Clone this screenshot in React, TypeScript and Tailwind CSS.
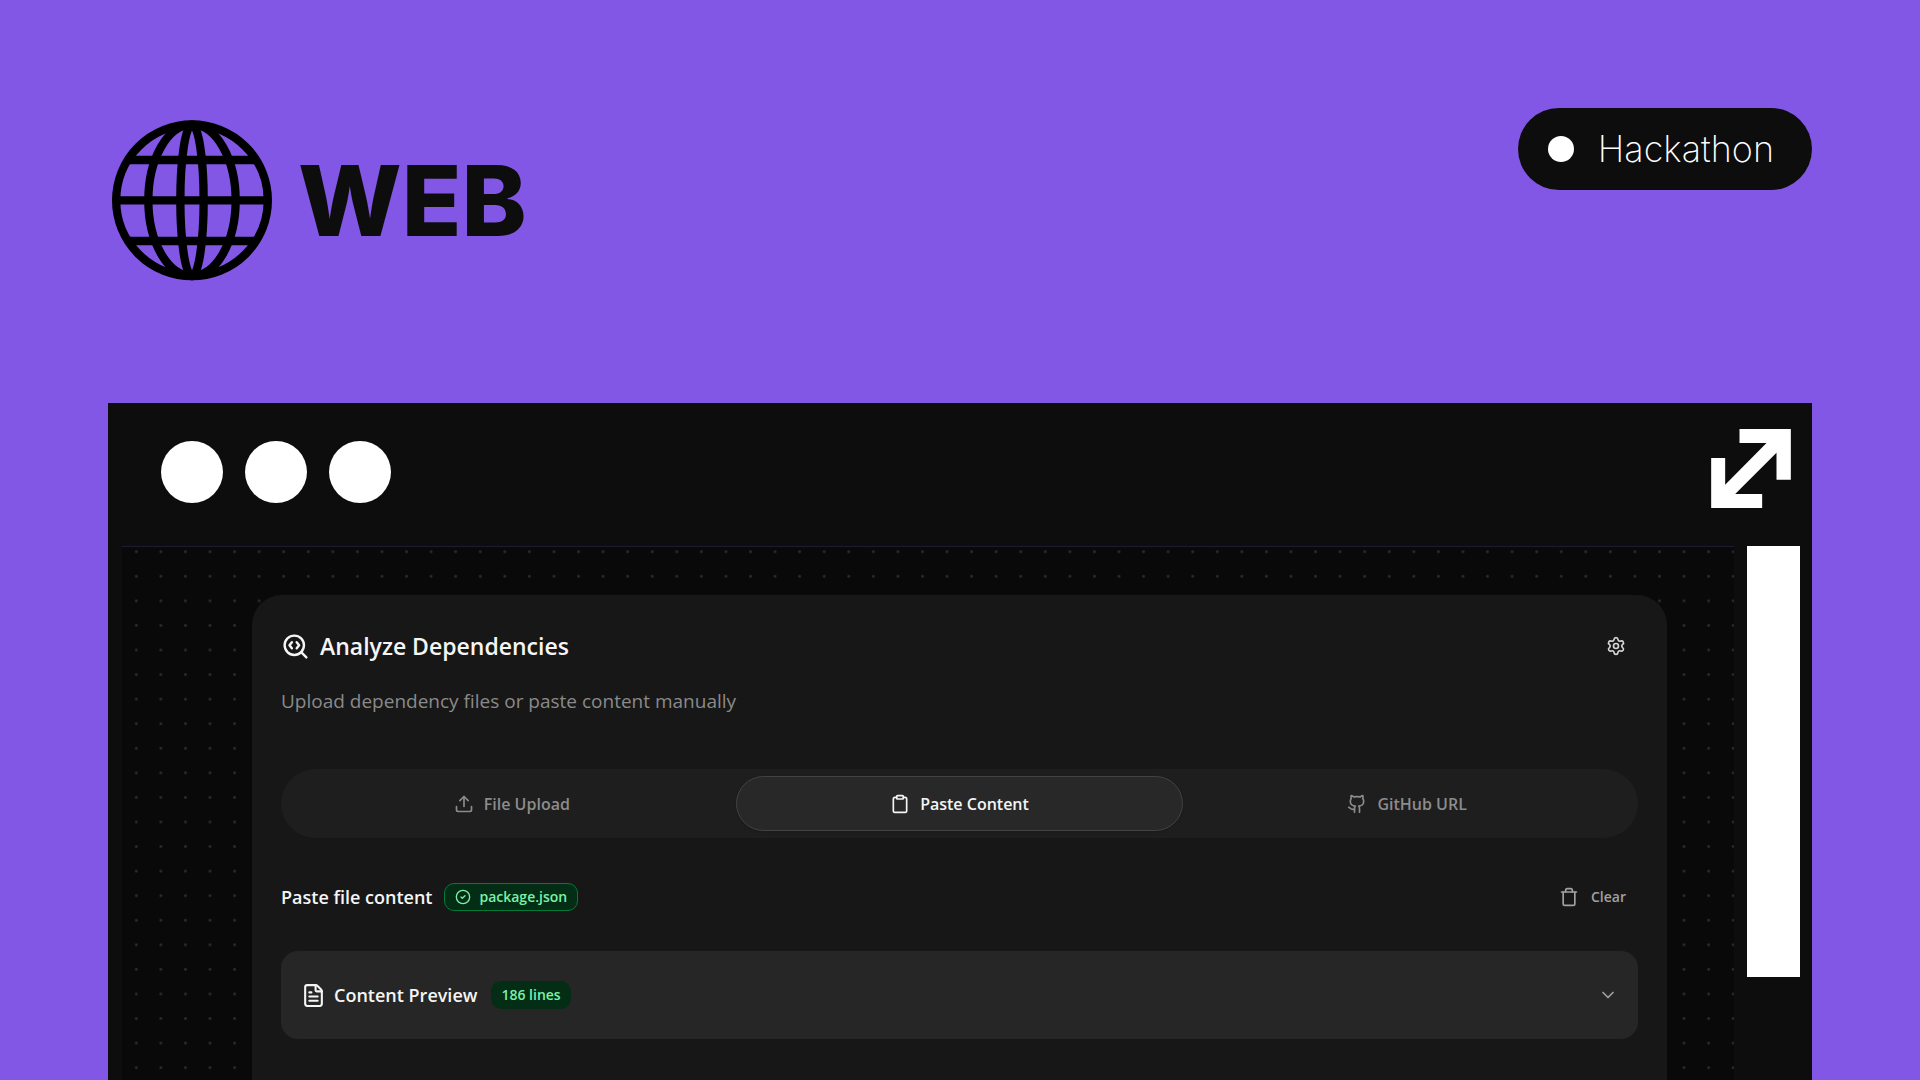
import { useState } from "react";
import {
  ChevronDown,
  CircleCheck,
  Clipboard,
  FileText,
  Github,
  SearchCode,
  Settings,
  Trash,
  Upload,
} from "lucide-react";

const tabs = [
  { id: "upload", label: "File Upload", icon: Upload },
  { id: "paste", label: "Paste Content", icon: Clipboard },
  { id: "github", label: "GitHub URL", icon: Github },
];

function Globe() {
  return (
    <svg
      viewBox="66 60 480 483"
      className="h-[161px] w-40"
      fill="none"
      stroke="#000"
      strokeWidth="25"
      aria-hidden="true"
    >
      <circle cx="306" cy="301" r="227.5" />
      <ellipse cx="306" cy="301" rx="131" ry="227" />
      <ellipse cx="306" cy="301" rx="35" ry="227" />
      <path d="M112 180H500M78 301H534M112 423H500" />
    </svg>
  );
}

function ExpandArrow() {
  return (
    <svg viewBox="0 0 239 237" className="h-[79px] w-20" fill="#fff" aria-hidden="true">
      <path d="M85 0H239V152H196V71L72 195H153V237H0V87H42V167L166 42H85Z" />
    </svg>
  );
}

function DotGrid() {
  return (
    <svg className="absolute inset-0 h-full w-full" aria-hidden="true">
      <defs>
        <pattern
          id="dots"
          x="2"
          y="-7.5"
          width="24.568"
          height="24.568"
          patternUnits="userSpaceOnUse"
        >
          <circle cx="12.3" cy="12.3" r="1.4" fill="#2c2c2c" />
        </pattern>
      </defs>
      <rect width="100%" height="100%" fill="url(#dots)" />
    </svg>
  );
}

function Header() {
  return (
    <header className="flex h-[295px] shrink-0 items-start justify-between">
      <div className="mt-3 ml-1 flex items-center gap-[26px]">
        <Globe />
        <h1 className="font-['Inter',sans-serif] text-[98px] leading-none font-extrabold text-[#0d0d0d]">
          WEB
        </h1>
      </div>
      <div className="flex h-[82px] items-center gap-6 rounded-full bg-[#0d0d0d] pr-[38px] pl-[30px] text-white">
        <span className="size-[26px] rounded-full bg-white" />
        <span className="font-['Inter',sans-serif] text-4xl leading-none font-extralight">
          Hackathon
        </span>
      </div>
    </header>
  );
}

function TitleBar() {
  return (
    <div className="flex h-[143px] shrink-0 items-start justify-between pt-[26px] pr-[21px] pl-[53px]">
      <div className="mt-3 flex gap-[22px]">
        <span className="size-[62px] rounded-full bg-white" />
        <span className="size-[62px] rounded-full bg-white" />
        <span className="size-[62px] rounded-full bg-white" />
      </div>
      <button type="button" aria-label="Expand window">
        <ExpandArrow />
      </button>
    </div>
  );
}

function AnalyzeCard() {
  const [active, setActive] = useState("paste");

  return (
    <section className="relative min-h-[520px] rounded-t-[30px] bg-[#171717] px-[29px] pt-[29px]">
      <div className="flex items-center justify-between">
        <h2 className="flex items-center gap-2.5 text-[23px] font-semibold text-[#f5f5f5]">
          <SearchCode className="size-[29px]" />
          Analyze Dependencies
        </h2>
        <button
          type="button"
          aria-label="Settings"
          className="flex size-11 items-center justify-center text-[#d4d4d4]"
        >
          <Settings className="size-5" />
        </button>
      </div>
      <p className="mt-[19px] text-[19px] leading-7 text-[#8a8a8a]">
        Upload dependency files or paste content manually
      </p>

      <div
        role="tablist"
        className="mt-[54px] grid grid-cols-3 rounded-full bg-[#1e1e1e] p-[7px]"
      >
        {tabs.map(({ id, label, icon: Icon }) => (
          <button
            key={id}
            type="button"
            role="tab"
            aria-selected={id === active}
            onClick={() => setActive(id)}
            className={
              id === active
                ? "flex h-[55px] items-center justify-center gap-2.5 rounded-full border border-[#434343] bg-[#282828] text-base font-semibold text-[#f5f5f5] shadow-sm"
                : "flex h-[55px] items-center justify-center gap-2.5 rounded-full border border-transparent text-base font-semibold text-[#8c8c8c]"
            }
          >
            <Icon className="size-5" />
            {label}
          </button>
        ))}
      </div>

      <div className="mt-[37px] flex h-11 items-center justify-between">
        <div className="flex items-center gap-3">
          <h3 className="text-lg font-semibold text-[#f5f5f5]">Paste file content</h3>
          <span className="flex h-7 items-center gap-2 rounded-[10px] border border-[#017a3a] bg-[#032e15] px-2.5 text-sm font-semibold text-[#7bf1a8]">
            <CircleCheck className="size-4" />
            package.json
          </span>
        </div>
        <button
          type="button"
          className="flex items-center gap-3 pr-3 text-sm font-semibold text-[#a1a1a1]"
        >
          <Trash className="size-5" />
          Clear
        </button>
      </div>

      <button
        type="button"
        className="mt-8 flex h-[88px] w-full items-center justify-between rounded-[17px] bg-[#262626] px-5"
      >
        <span className="flex items-center gap-3.5">
          <span className="flex items-center gap-2 text-lg font-semibold text-[#f5f5f5]">
            <FileText className="size-[25px]" />
            Content Preview
          </span>
          <span className="flex h-7 items-center rounded-[10px] bg-[#032e15] px-2.5 text-sm font-semibold text-[#7bf1a8]">
            186 lines
          </span>
        </span>
        <ChevronDown className="size-5 text-[#a1a1a1]" />
      </button>
    </section>
  );
}

export default function App() {
  return (
    <main className="flex h-screen flex-col overflow-hidden bg-[#8257e6] px-[108px] pt-[108px] font-['Open_Sans','Noto_Sans',sans-serif]">
      <Header />
      <div className="flex flex-1 flex-col bg-[#0d0d0d]">
        <TitleBar />
        <div className="flex flex-1 items-start gap-[13px] pr-3 pl-3.5">
          <div className="relative flex-1 border-t border-[#1c1c2e] bg-[#090909] pt-12 pr-[67px] pl-[130px]">
            <DotGrid />
            <AnalyzeCard />
          </div>
          <div className="h-[431px] w-[53px] bg-white" />
        </div>
      </div>
    </main>
  );
}
